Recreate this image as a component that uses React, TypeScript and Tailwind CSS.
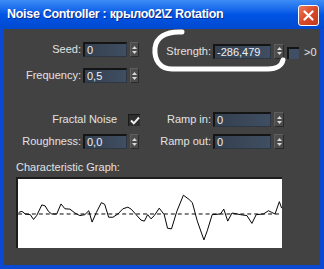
import React from "react";

const pts =
  "50,183 60,180 70,188 85,190 95,205 105,192 120,160 130,163 140,180 150,188 165,188 178,157 190,172 205,173 220,185 235,193 250,190 262,178 272,213 285,183 300,153 310,158 322,198 335,198 350,188 365,172 380,167 390,173 405,190 420,207 430,210 440,190 450,203 460,193 475,170 490,190 500,232 512,234 528,180 548,130 565,143 575,153 590,210 610,268 620,240 635,190 660,188 670,173 682,210 695,185 720,190 740,193 755,217 768,190 790,188 805,178 815,183 825,188 838,150 845,170";

function Spinner({ w = 9 }: { w?: number }) {
  return (
    <div
      className="h-[15px] bg-[#4c4c4c] border border-t-[#5e5e5e] border-l-[#5e5e5e] border-b-[#2a2a2a] border-r-[#2a2a2a] flex flex-col items-center justify-center gap-[2px]"
      style={{ width: w }}
    >
      <svg width="5" height="3" viewBox="0 0 5 3">
        <path d="M0 3 L2.5 0 L5 3 Z" fill="#d8d8d8" />
      </svg>
      <svg width="5" height="3" viewBox="0 0 5 3">
        <path d="M0 0 L2.5 3 L5 0 Z" fill="#d8d8d8" />
      </svg>
    </div>
  );
}

function Input({ value, w }: { value: string; w: number }) {
  return (
    <div
      className="h-[15px] bg-gradient-to-r from-[#34404f] to-[#3f4e62] border-t-2 border-l-2 border-t-[#151515] border-l-[#151515] border-b border-r border-b-[#2e3642] border-r-[#2e3642] text-[11px] leading-[12px] text-[#eef0f4] pl-[2px]"
      style={{ width: w }}
    >
      {value}
    </div>
  );
}

function Label({ text, w }: { text: string; w: number }) {
  return (
    <div className="text-right text-[11px] leading-[15px] text-[#e2e2e2] whitespace-nowrap" style={{ width: w }}>
      {text}
    </div>
  );
}

export default function App() {
  return (
    <div
      className="w-[324px] h-[269px] relative overflow-hidden bg-[#0a49d4]"
      style={{ fontFamily: '"Liberation Sans", Arial, sans-serif' }}
    >
      <div className="h-[29px] flex items-center pl-[7px] pr-[5px] bg-gradient-to-b from-[#3d8cf7] via-[#0055e5] to-[#0049d0]">
        <span
          className="text-white font-bold text-[12.5px] tracking-[-0.3px] whitespace-nowrap"
          style={{ textShadow: "1px 1px 0 #0a2a8a" }}
        >
          {"Noise Controller : крыло02\\Z Rotation"}
        </span>
        <div className="ml-auto mt-[1px] w-[21px] h-[21px] rounded-[3px] border border-white bg-gradient-to-br from-[#e97a5a] via-[#d8482a] to-[#c23a1c] flex items-center justify-center">
          <svg width="11" height="11" viewBox="0 0 11 11">
            <path d="M1.5 1.5 L9.5 9.5 M9.5 1.5 L1.5 9.5" stroke="white" strokeWidth="2.2" strokeLinecap="round" />
          </svg>
        </div>
      </div>
      <div className="mx-[4px] h-[236px] bg-[#424242] flex flex-col">
        {/* Row 1 */}
        <div className="flex items-start mt-[13px] h-[15px]">
          <div className="w-[146px] flex items-center">
            <Label text="Seed:" w={77} />
            <div className="ml-[2px]"><Input value="0" w={44} /></div>
            <div className="ml-[3px]"><Spinner /></div>
          </div>
          <div className="flex items-center">
            <Label text="Strength:" w={61} />
            <div className="ml-[2px]"><Input value="-286,479" w={58} /></div>
            <div className="ml-[3px]"><Spinner w={10} /></div>
            <div className="ml-[3px] mt-[3px] w-[12px] h-[12px] bg-[#3f4f66] border-t-2 border-l-2 border-t-[#151515] border-l-[#151515]" />
            <div className="ml-[5px] mt-[3px] text-[11px] leading-[15px] text-[#e2e2e2]">&gt;0</div>
          </div>
        </div>
        {/* Row 2 */}
        <div className="flex items-center mt-[11px] h-[15px]">
          <Label text="Frequency:" w={77} />
          <div className="ml-[2px]"><Input value="0,5" w={44} /></div>
          <div className="ml-[3px]"><Spinner /></div>
        </div>
        {/* Row 3 */}
        <div className="flex items-center mt-[29px] h-[15px]">
          <div className="w-[146px] flex items-center">
            <Label text="Fractal Noise" w={113} />
            <div className="ml-[11px] w-[12px] h-[12px] bg-[#2e2e2e] border-t border-l border-[#1a1a1a] flex items-center justify-center">
              <svg width="10" height="9" viewBox="0 0 10 9">
                <path d="M1 4.5 L3.8 7.3 L9 1.5" stroke="#f0f0f0" strokeWidth="2" fill="none" />
              </svg>
            </div>
          </div>
          <div className="flex items-center">
            <Label text="Ramp in:" w={61} />
            <div className="ml-[2px]"><Input value="0" w={58} /></div>
            <div className="ml-[3px]"><Spinner w={10} /></div>
          </div>
        </div>
        {/* Row 4 */}
        <div className="flex items-center mt-[7px] h-[15px]">
          <div className="w-[146px] flex items-center">
            <Label text="Roughness:" w={77} />
            <div className="ml-[2px]"><Input value="0,0" w={44} /></div>
            <div className="ml-[3px]"><Spinner /></div>
          </div>
          <div className="flex items-center">
            <Label text="Ramp out:" w={61} />
            <div className="ml-[2px]"><Input value="0" w={58} /></div>
            <div className="ml-[3px]"><Spinner w={10} /></div>
          </div>
        </div>
        {/* Graph */}
        <div className="mt-[12px] pl-[12px] text-[11px] leading-[13px] text-[#e2e2e2]">Characteristic Graph:</div>
        <div className="mt-[3px] ml-[12px] w-[266px] h-[71px] bg-white border-t-2 border-l-2 border-[#1c1c1c]">
          <svg width="264" height="69" viewBox="48 80 798 213" preserveAspectRatio="none">
            <line x1="48" y1="188" x2="846" y2="188" stroke="#000" strokeWidth="3" strokeDasharray="12 9" />
            <polyline points={pts} fill="none" stroke="#000" strokeWidth="3" />
          </svg>
        </div>
      </div>
      <svg className="absolute left-0 top-0 pointer-events-none" width="324" height="269">
        <path
          d="M 182 32 C 165 31, 156 38, 155 48 C 154 60, 160 69, 172 69 L 268 69 C 277 69, 282 65, 283 60"
          fill="none"
          stroke="white"
          strokeWidth="5"
          strokeLinecap="round"
        />
      </svg>
    </div>
  );
}
